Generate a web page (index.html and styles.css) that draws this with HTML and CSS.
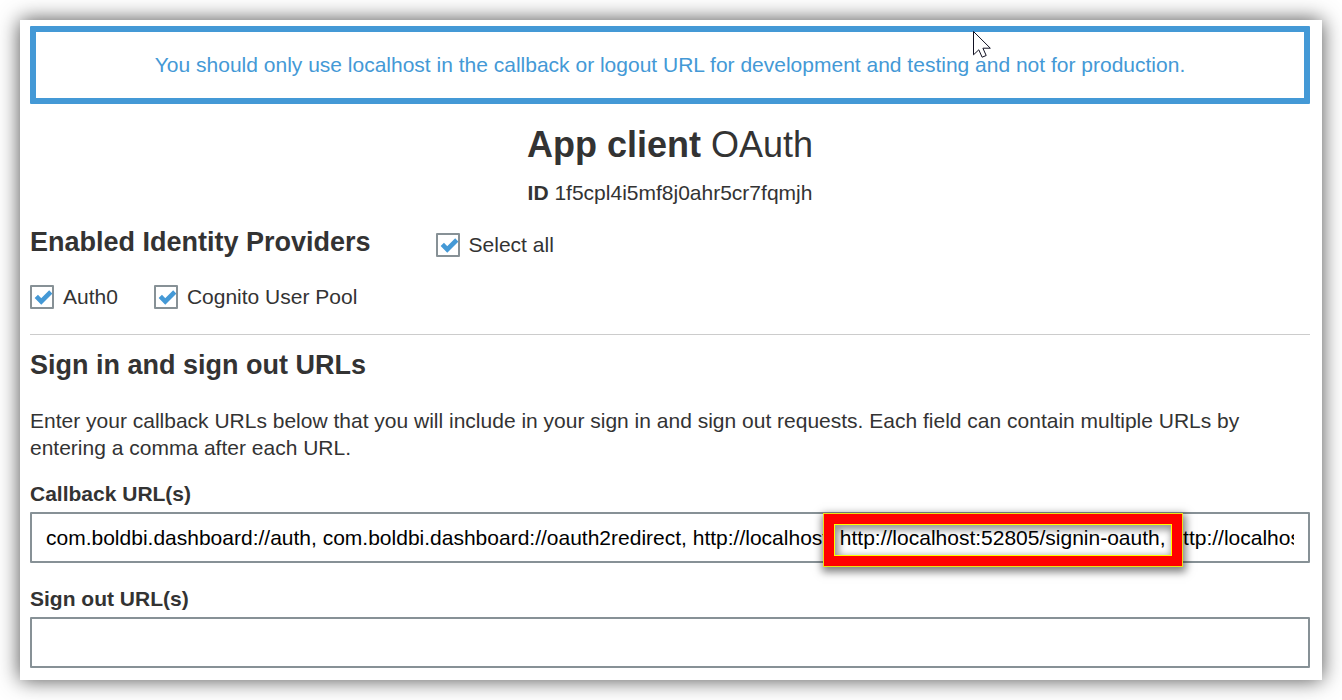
FILE: index.html
```html
<!DOCTYPE html>
<html lang="en">
<head>
<meta charset="utf-8">
<meta name="viewport" content="width=device-width, initial-scale=1">
<title>App client OAuth</title>
<link rel="stylesheet" href="styles.css">
</head>
<body>
<main class="panel">
  <p class="banner">You should only use localhost in the callback or logout URL for development and testing and not for production.</p>
  <svg class="cursor" viewBox="0 0 19 28" aria-hidden="true"><path d="M.5.5v23.3l5.3-5 3.3 7.4 4.1-1.7-3.3-7.3h7.4z" fill="#fff" stroke="#112" stroke-width="1"/></svg>

  <header class="title">
    <h1 class="title-name">App client <span class="title-kind">OAuth</span></h1>
    <p class="client-id"><b>ID</b> 1f5cpl4i5mf8j0ahr5cr7fqmjh</p>
  </header>

  <section class="providers">
    <div class="providers-head">
      <h2 class="heading">Enabled Identity Providers</h2>
      <label class="check"><input class="box" type="checkbox" checked>Select all</label>
    </div>
    <div class="providers-list">
      <label class="check"><input class="box" type="checkbox" checked>Auth0</label>
      <label class="check"><input class="box" type="checkbox" checked>Cognito User Pool</label>
    </div>
  </section>

  <section class="urls">
    <h2 class="heading">Sign in and sign out URLs</h2>
    <p class="help">Enter your callback URLs below that you will include in your sign in and sign out requests. Each field can contain multiple URLs by entering a comma after each URL.</p>
    <div class="field">
      <label class="field-label" for="callback">Callback URL(s)</label>
      <div class="field-control">
        <input class="text" id="callback" type="text" value="com.boldbi.dashboard://auth, com.boldbi.dashboard://oauth2redirect, http://localhost, http://localhost:52805/signin-oauth, http://localhost:52805">
        <span class="marker"></span>
      </div>
    </div>
    <div class="field">
      <label class="field-label" for="signout">Sign out URL(s)</label>
      <div class="field-control">
        <input class="text" id="signout" type="text">
      </div>
    </div>
  </section>
</main>
</body>
</html>
```
FILE: styles.css
```css
* { box-sizing: border-box; }

body {
  margin: 0;
  padding: 20px;
  background: #fff;
  color: #333;
  font: 21px/27px "Liberation Sans", Arial, sans-serif;
}

h1, h2, p { margin: 0; }

.panel {
  position: relative;
  padding: 6px 12px 12px 10px;
  background: #fff;
  box-shadow: 0 0 20px rgba(0, 0, 0, .7);
}

.banner {
  padding: 19px 12px 20px;
  border: 6px solid #4499d6;
  border-radius: 1px;
  color: #4499d6;
  text-align: center;
}

.cursor {
  position: absolute;
  top: 11px;
  left: 953px;
  width: 19px;
  height: 28px;
}

.title {
  margin-top: 20px;
  text-align: center;
}

.title-name {
  font-size: 36px;
  line-height: 42px;
}

.title-kind { font-weight: 400; }

.client-id { margin-top: 13px; }

.providers {
  margin-top: 18px;
  padding-bottom: 24px;
  border-bottom: 1px solid #ccc;
}

.providers-head {
  display: flex;
  align-items: center;
  gap: 65px;
}

.providers-head .check { padding-top: 5px; }

.heading {
  font-size: 27px;
  line-height: 36px;
}

.providers-list {
  display: flex;
  gap: 36px;
  margin-top: 23px;
}

.check {
  display: flex;
  align-items: center;
  gap: 9px;
}

.box {
  appearance: none;
  width: 24px;
  height: 24px;
  margin: 0;
  border: 2px solid #879196;
  border-radius: 1px;
  background: #fff;
}

.box:checked {
  background: #fff url("data:image/svg+xml,%3Csvg xmlns='http://www.w3.org/2000/svg' viewBox='0 0 20 20'%3E%3Cpath d='M4.3 9.3l5 5.2L18.8 5' fill='none' stroke='%234499d6' stroke-width='4.6'/%3E%3C/svg%3E") center / 20px no-repeat;
}

.urls { margin-top: 12px; }

.help { margin-top: 24px; }

.field { margin-top: 22px; }

.help + .field { margin-top: 19px; }

.field-label {
  display: block;
  margin-bottom: 5px;
  font-weight: 700;
}

.field-control { position: relative; }

.text {
  display: block;
  width: 100%;
  height: 51px;
  padding: 0 14px;
  border: 2px solid #879196;
  border-radius: 1px;
  background: #fff;
  color: #000;
  font: inherit;
}

.marker {
  position: absolute;
  top: 1px;
  left: 793px;
  width: 360px;
  height: 54px;
  border: 1px solid #eae21a;
  box-shadow: 1px 3px 8px 2px rgba(0, 0, 0, .5), inset 0 0 0 10px #f00, inset 0 0 0 11px #ff0, inset 2px 3px 7px 13px rgba(0, 0, 0, .4);
  pointer-events: none;
}
```
